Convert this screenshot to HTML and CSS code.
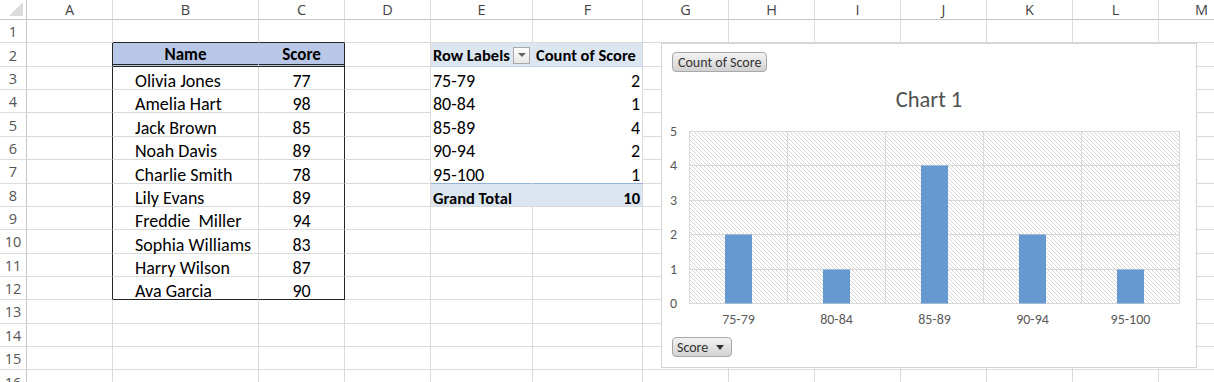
FILE: index.html
```html
<!DOCTYPE html>
<html>
<head>
<meta charset="utf-8">
<title>Sheet</title>
<link rel="stylesheet" href="styles.css">
</head>
<body>
<div class="sheet">
  <div class="hdr">
    <div class="corner"><span class="tri"></span></div>
    <div class="hc">A</div><div class="hc">B</div><div class="hc">C</div><div class="hc">D</div><div class="hc">E</div><div class="hc">F</div><div class="hc">G</div><div class="hc">H</div><div class="hc">I</div><div class="hc">J</div><div class="hc">K</div><div class="hc">L</div><div class="hc">M</div>
  </div>

  <div class="row"><div class="rh">1</div><div class="c"></div><div class="c tt"></div><div class="c tt"></div><div class="c"></div><div class="c"></div><div class="c"></div><div class="c"></div><div class="c"></div><div class="c"></div><div class="c"></div><div class="c"></div><div class="c"></div><div class="c"></div></div>

  <div class="row"><div class="rh">2</div><div class="c tl"></div><div class="c th thb">Name</div><div class="c th tr">Score</div><div class="c"></div><div class="c ph phe"><span>Row Labels</span><span class="dd"></span></div><div class="c ph pf2">Count of Score</div><div class="c"></div><div class="c"></div><div class="c"></div><div class="c"></div><div class="c"></div><div class="c"></div><div class="c"></div></div>

  <div class="row"><div class="rh">3</div><div class="c tl"></div><div class="c nm">Olivia Jones</div><div class="c sc tr">77</div><div class="c"></div><div class="c pe">75-79</div><div class="c pf">2</div><div class="c"></div><div class="c"></div><div class="c"></div><div class="c"></div><div class="c"></div><div class="c"></div><div class="c"></div></div>

  <div class="row"><div class="rh">4</div><div class="c tl"></div><div class="c nm">Amelia Hart</div><div class="c sc tr">98</div><div class="c"></div><div class="c pe">80-84</div><div class="c pf">1</div><div class="c"></div><div class="c"></div><div class="c"></div><div class="c"></div><div class="c"></div><div class="c"></div><div class="c"></div></div>

  <div class="row"><div class="rh">5</div><div class="c tl"></div><div class="c nm">Jack Brown</div><div class="c sc tr">85</div><div class="c"></div><div class="c pe">85-89</div><div class="c pf">4</div><div class="c"></div><div class="c"></div><div class="c"></div><div class="c"></div><div class="c"></div><div class="c"></div><div class="c"></div></div>

  <div class="row"><div class="rh">6</div><div class="c tl"></div><div class="c nm">Noah Davis</div><div class="c sc tr">89</div><div class="c"></div><div class="c pe">90-94</div><div class="c pf">2</div><div class="c"></div><div class="c"></div><div class="c"></div><div class="c"></div><div class="c"></div><div class="c"></div><div class="c"></div></div>

  <div class="row"><div class="rh">7</div><div class="c tl"></div><div class="c nm">Charlie Smith</div><div class="c sc tr">78</div><div class="c"></div><div class="c pe pl">95-100</div><div class="c pf pl">1</div><div class="c"></div><div class="c"></div><div class="c"></div><div class="c"></div><div class="c"></div><div class="c"></div><div class="c"></div></div>

  <div class="row"><div class="rh">8</div><div class="c tl"></div><div class="c nm">Lily Evans</div><div class="c sc tr">89</div><div class="c"></div><div class="c pt phe">Grand Total</div><div class="c pt pf">10</div><div class="c"></div><div class="c"></div><div class="c"></div><div class="c"></div><div class="c"></div><div class="c"></div><div class="c"></div></div>

  <div class="row"><div class="rh">9</div><div class="c tl"></div><div class="c nm">Freddie&nbsp; Miller</div><div class="c sc tr">94</div><div class="c"></div><div class="c"></div><div class="c"></div><div class="c"></div><div class="c"></div><div class="c"></div><div class="c"></div><div class="c"></div><div class="c"></div><div class="c"></div></div>

  <div class="row"><div class="rh">10</div><div class="c tl"></div><div class="c nm">Sophia Williams</div><div class="c sc tr">83</div><div class="c"></div><div class="c"></div><div class="c"></div><div class="c"></div><div class="c"></div><div class="c"></div><div class="c"></div><div class="c"></div><div class="c"></div><div class="c"></div></div>

  <div class="row"><div class="rh">11</div><div class="c tl"></div><div class="c nm">Harry Wilson</div><div class="c sc tr">87</div><div class="c"></div><div class="c"></div><div class="c"></div><div class="c"></div><div class="c"></div><div class="c"></div><div class="c"></div><div class="c"></div><div class="c"></div><div class="c"></div></div>

  <div class="row"><div class="rh">12</div><div class="c tl"></div><div class="c nm tb">Ava Garcia</div><div class="c sc tr tb">90</div><div class="c"></div><div class="c"></div><div class="c"></div><div class="c"></div><div class="c"></div><div class="c"></div><div class="c"></div><div class="c"></div><div class="c"></div><div class="c"></div></div>

  <div class="row"><div class="rh">13</div><div class="c"></div><div class="c"></div><div class="c"></div><div class="c"></div><div class="c"></div><div class="c"></div><div class="c"></div><div class="c"></div><div class="c"></div><div class="c"></div><div class="c"></div><div class="c"></div><div class="c"></div></div>

  <div class="row"><div class="rh">14</div><div class="c"></div><div class="c"></div><div class="c"></div><div class="c"></div><div class="c"></div><div class="c"></div><div class="c"></div><div class="c"></div><div class="c"></div><div class="c"></div><div class="c"></div><div class="c"></div><div class="c"></div></div>

  <div class="row"><div class="rh">15</div><div class="c"></div><div class="c"></div><div class="c"></div><div class="c"></div><div class="c"></div><div class="c"></div><div class="c"></div><div class="c"></div><div class="c"></div><div class="c"></div><div class="c"></div><div class="c"></div><div class="c"></div></div>

  <div class="row"><div class="rh">16</div><div class="c"></div><div class="c"></div><div class="c"></div><div class="c"></div><div class="c"></div><div class="c"></div><div class="c"></div><div class="c"></div><div class="c"></div><div class="c"></div><div class="c"></div><div class="c"></div><div class="c"></div></div>
</div>

<div class="chart">
  <div class="fbtn">Count of Score</div>
  <div class="ctitle">Chart 1</div>
  <svg class="plot" width="534" height="210" viewBox="0 0 534 210">
    <defs>
      <pattern id="hatch" patternUnits="userSpaceOnUse" width="4" height="4">
        <path d="M-1,-1 L5,5 M-1,3 L1,5 M3,-1 L5,1" stroke="#d6d6d6" stroke-width="1"/>
      </pattern>
    </defs>
    <rect x="27.5" y="7.5" width="490" height="172" fill="#fff"/>
    <rect x="27.5" y="7.5" width="490" height="172" fill="url(#hatch)" stroke="#d9d9d9"/>
    <g stroke="#d9d9d9" stroke-width="1">
      <line x1="27.5" y1="41.5" x2="517.5" y2="41.5"/>
      <line x1="27.5" y1="76.5" x2="517.5" y2="76.5"/>
      <line x1="27.5" y1="110.5" x2="517.5" y2="110.5"/>
      <line x1="27.5" y1="145.5" x2="517.5" y2="145.5"/>
      <line x1="125.5" y1="7.5" x2="125.5" y2="179.5"/>
      <line x1="223.5" y1="7.5" x2="223.5" y2="179.5"/>
      <line x1="321.5" y1="7.5" x2="321.5" y2="179.5"/>
      <line x1="419.5" y1="7.5" x2="419.5" y2="179.5"/>
    </g>
    <g fill="#6699cf">
      <rect x="63" y="110.5" width="27" height="69"/>
      <rect x="161" y="145.5" width="27" height="34"/>
      <rect x="259" y="41.5" width="27" height="138"/>
      <rect x="357" y="110.5" width="27" height="69"/>
      <rect x="455" y="145.5" width="27" height="34"/>
    </g>
    <g class="ylab" text-anchor="end">
      <text x="15" y="12">5</text>
      <text x="15" y="46">4</text>
      <text x="15" y="81">3</text>
      <text x="15" y="115">2</text>
      <text x="15" y="150">1</text>
      <text x="15" y="184">0</text>
    </g>
    <g class="xlab" text-anchor="middle">
      <text x="76.5" y="200">75-79</text>
      <text x="174.5" y="200">80-84</text>
      <text x="272.5" y="200">85-89</text>
      <text x="370.5" y="200">90-94</text>
      <text x="468.5" y="200">95-100</text>
    </g>
  </svg>
  <div class="fbtn sbtn">Score <span class="caret"></span></div>
</div>
</body>
</html>
```

FILE: styles.css
```css
* { box-sizing: border-box; margin: 0; padding: 0; }
html, body { width: 1214px; height: 382px; overflow: hidden; background: #fff; }
body { position: relative; font-family: "Carlito", "Calibri", "Lato", sans-serif; color: #000; }

.sheet { width: 1245px; }
.hdr, .row {
  display: grid;
  grid-template-columns: 27px 86px 146px 86px 86px 102px 110px 86px 86px 86px 86px 86px 86px 86px;
}
.hdr { height: 20px; }
.row { height: 23.36px; }

.corner {
  border-right: 1px solid #c6c6c6;
  border-bottom: 1px solid #c6c6c6;
  display: flex; align-items: flex-end; justify-content: flex-end;
  padding: 0 3px 3px 0;
}
.tri {
  width: 14px; height: 14px; background: #dcdcdc;
  clip-path: polygon(100% 0, 100% 100%, 0 100%);
}
.hc {
  border-right: 1px solid #dcdcdc;
  border-bottom: 1px solid #c6c6c6;
  display: flex; align-items: center; justify-content: center;
  font-family: "Open Sans", "Noto Sans", sans-serif;
  font-size: 14.5px; color: #444;
}
.rh {
  border-right: 1px solid #c6c6c6;
  border-bottom: 1px solid #dcdcdc;
  display: flex; align-items: center; justify-content: center;
  font-family: "Open Sans", "Noto Sans", sans-serif;
  font-size: 14.5px; color: #555;
  padding-top: 1px;
}

.c {
  border-right: 1px solid #dadada;
  border-bottom: 1px solid #dadada;
  display: flex; align-items: flex-end;
  font-size: 18px; line-height: 15px;
  white-space: nowrap;
}

/* Names table B2:C12 */
.tl { border-right-color: #262626; }
.tt { border-bottom-color: #262626; }
.tr { border-right-color: #262626; }
.tb { border-bottom-color: #262626; }
.th {
  background: #b8c7e5; font-weight: bold; justify-content: center;
  border-bottom: 3px double #262626;
  font-size: 17px; padding-bottom: 2px;
}
.thb { border-right-color: #b8c7e5; }
.nm { padding-left: 22px; }
.sc { justify-content: center; }

/* Pivot table E2:F8 */
.ph {
  background: #dce6f1; font-weight: bold; font-size: 16.5px;
  border-bottom-color: #c4d5ea;
  align-items: center; padding-top: 1px;
}
.phe { border-right-color: #dce6f1; justify-content: space-between; padding-left: 2px; padding-right: 2px; }
.pf2 { padding-left: 3px; }
.pe { border-right-color: #fff; border-bottom-color: #fff; padding-left: 2px; }
.pf { border-bottom-color: #fff; justify-content: flex-end; padding-right: 2px; }
.pl { border-bottom-color: #95b3d7; }
.pt { background: #dce6f1; font-weight: bold; font-size: 16.5px; border-bottom-color: #dadada; }
.dd {
  width: 17px; height: 17px;
  border: 1px solid #a9a9a9;
  background: linear-gradient(#ffffff, #e6e6e6);
  display: flex; align-items: center; justify-content: center;
}
.dd::after {
  content: ""; width: 0; height: 0;
  border-left: 4px solid transparent;
  border-right: 4px solid transparent;
  border-top: 4px solid #666;
}

/* Chart (floating object over the sheet) */
.chart {
  position: absolute; left: 661px; top: 43px;
  width: 536px; height: 325px;
  border: 1px solid #d4d4d4;
  background: #fff;
  display: flex; flex-direction: column; align-items: flex-start;
}
.fbtn {
  margin: 8px 0 0 10px;
  height: 20px; padding: 0 5px;
  border: 1px solid #a8a8a8; border-radius: 4px;
  background: linear-gradient(#f3f3f3, #d2d2d2);
  font-size: 14px; color: #333;
  display: flex; align-items: center; gap: 8px;
}
.ctitle {
  align-self: stretch;
  margin-top: 14px; height: 28px; line-height: 28px;
  text-align: center; font-size: 22.5px; color: #505050;
}
.plot { display: block; margin-top: 10px; }
.ylab text, .xlab text { font-size: 14px; fill: #595959; }
.sbtn { margin-top: 3px; padding: 0 7px 0 4px; }
.caret {
  width: 0; height: 0;
  border-left: 4px solid transparent;
  border-right: 4px solid transparent;
  border-top: 5px solid #333;
}
```
